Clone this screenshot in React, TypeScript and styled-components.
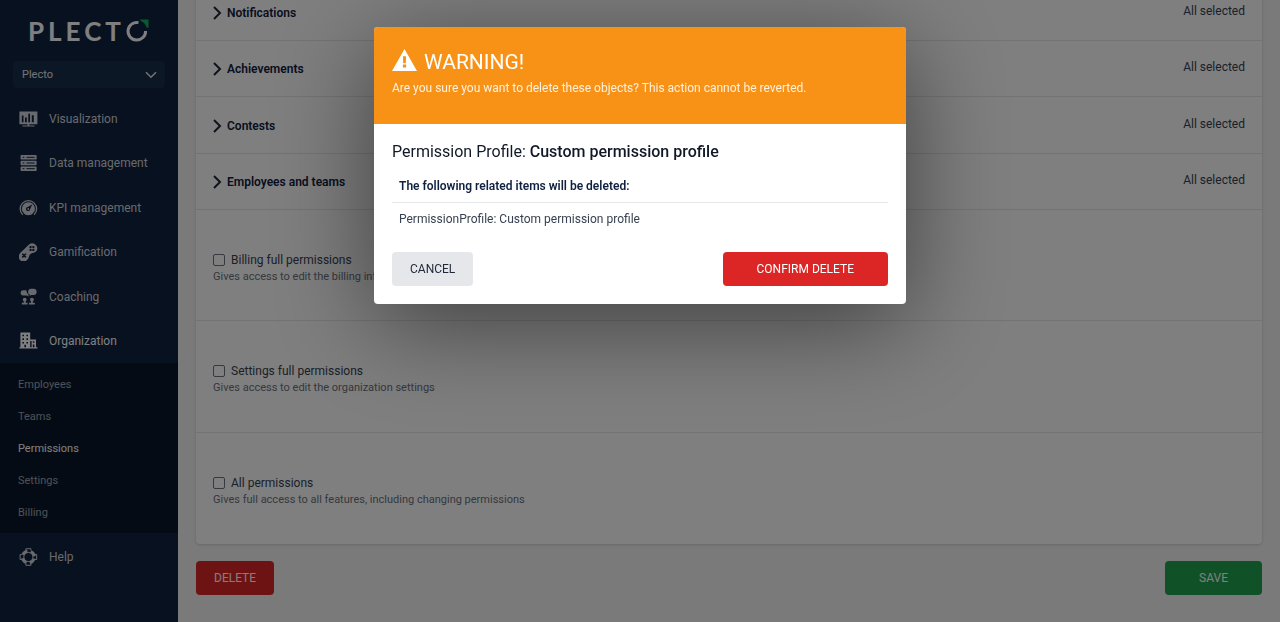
import React from "react";
import styled, { createGlobalStyle, css } from "styled-components";

const GlobalStyle = createGlobalStyle`
  *, *::before, *::after { box-sizing: border-box; }
  body {
    margin: 0;
    background: #f4f4f4;
    color: #374151;
    font-family: Roboto, "Liberation Sans", sans-serif;
    font-size: 12px;
    line-height: 18px;
    overflow: hidden;
  }
  button, select, input { font: inherit; }
  h1, h2, p, ul { margin: 0; padding: 0; }
  ul { list-style: none; }
`;

/* ---------- Shell ---------- */

const Shell = styled.div`
  display: flex;
  min-height: 100vh;
`;

const Sidebar = styled.nav`
  flex: 0 0 178px;
  background: #102240;
  color: #e5e7eb;
`;

const Main = styled.main`
  flex: 1;
  min-width: 0;
  padding: 0 18px;
`;

/* ---------- Sidebar ---------- */

const Logo = styled.a`
  display: flex;
  align-items: center;
  height: 61px;
  padding-left: 28px;
  color: #fff;
  font-family: Lato, sans-serif;
  font-size: 26px;
  font-weight: 700;
  line-height: 30px;
  letter-spacing: 4px;
  text-decoration: none;
`;

const AccountPicker = styled.label`
  display: grid;
  align-items: center;
  margin: 0 13px 8px;
  svg {
    grid-area: 1 / 1;
    justify-self: end;
    margin-right: 8px;
    pointer-events: none;
  }
`;

const AccountSelect = styled.select`
  grid-area: 1 / 1;
  appearance: none;
  width: 100%;
  height: 27px;
  padding: 0 9px;
  border: 0;
  border-radius: 4px;
  background: #182e4b;
  color: #e5e7eb;
  font-size: 11px;
`;

const MenuList = styled.ul`
  display: grid;
  grid-auto-rows: 1fr;
  height: 267px;
  li { display: grid; }
`;

const MenuLink = styled.a<{ $active?: boolean }>`
  display: flex;
  align-items: center;
  gap: 11px;
  min-height: 44px;
  padding: 1px 0 0 19px;
  color: ${(p) => (p.$active ? "#ffffff" : "#d1d5db")};
  text-decoration: none;
`;

const SubMenu = styled.ul`
  padding: 6px 0 4px;
  border-bottom: 1px solid #14283c;
  background: #0b1728;
`;

const SubLink = styled.a<{ $active?: boolean }>`
  display: flex;
  align-items: center;
  height: 32px;
  padding-left: 18px;
  color: ${(p) => (p.$active ? "#ffffff" : "#9ca3af")};
  font-size: 11px;
  text-decoration: none;
`;

/* ---------- Permissions card ---------- */

const Card = styled.section`
  margin-top: -16px;
  border-radius: 4px;
  background: #fff;
  box-shadow: 0 1px 3px rgba(0, 0, 0, 0.16);
`;

const Groups = styled.ul`
  display: grid;
  grid-auto-rows: 1fr;
  height: 226px;
`;

const Group = styled.li`
  display: flex;
  align-items: center;
  justify-content: space-between;
  padding: 0 17px;
  border-bottom: 1px solid #e5e7eb;
`;

const GroupToggle = styled.button`
  display: flex;
  align-items: center;
  gap: 5px;
  padding: 2px 0 0;
  border: 0;
  background: none;
  color: #0f2040;
  font-weight: 600;
`;

const GroupState = styled.span`
  padding-bottom: 2px;
`;

const Options = styled.div`
  display: grid;
  grid-auto-rows: 1fr;
  height: 334px;
`;

const Option = styled.div`
  display: flex;
  flex-direction: column;
  justify-content: center;
  padding: 6px 17px 0;
  border-bottom: 1px solid #e5e7eb;
  &:last-child { border-bottom: 0; }
`;

const OptionLabel = styled.label`
  display: flex;
  align-items: center;
  gap: 6px;
`;

const CheckBox = styled.input`
  appearance: none;
  width: 12px;
  height: 12px;
  margin: 0;
  border: 1px solid #6b7280;
  border-radius: 2px;
  background: #fff;
`;

const OptionHint = styled.p`
  color: #6b7280;
  font-size: 11px;
  line-height: 16px;
`;

/* ---------- Buttons ---------- */

const tones = {
  danger: css`background: #dc2626; color: #fff;`,
  success: css`background: #22a350; color: #fff;`,
  neutral: css`background: #e5e7eb; color: #1f2937;`,
};

const Button = styled.button<{ $tone: keyof typeof tones; $wide?: boolean }>`
  height: 34px;
  padding: 0 ${(p) => (p.$wide ? 34 : 18)}px;
  border: 0;
  border-radius: 4px;
  text-transform: uppercase;
  ${(p) => tones[p.$tone]}
`;

const ButtonRow = styled.div`
  display: flex;
  justify-content: space-between;
  margin-top: 17px;
`;

/* ---------- Dialog ---------- */

const Backdrop = styled.div`
  position: fixed;
  inset: 0;
  display: flex;
  align-items: flex-start;
  justify-content: center;
  padding-top: 27px;
  background: rgba(0, 0, 0, 0.5);
`;

const Dialog = styled.div`
  width: 532px;
  border-radius: 4px;
  background: #fff;
  box-shadow: 0 20px 100px rgba(0, 0, 0, 0.5);
  overflow: hidden;
`;

const DialogHeader = styled.header`
  padding: 19px 18px 27px;
  background: #f89217;
  color: #fff;
`;

const DialogTitle = styled.h1`
  display: flex;
  align-items: center;
  gap: 7px;
  font-size: 21px;
  font-weight: 400;
  line-height: 32px;
`;

const DialogText = styled.p`
  padding-top: 1px;
  color: #fff1dc;
`;

const DialogBody = styled.div`
  padding: 17px 18px 18px;
`;

const ObjectTitle = styled.h2`
  color: #111827;
  font-size: 16px;
  font-weight: 400;
  line-height: 22px;
  strong { font-weight: 500; }
`;

const RelatedTable = styled.table`
  width: 100%;
  margin-top: 7px;
  border-collapse: collapse;
  text-align: left;
  th {
    padding: 7px;
    border-bottom: 1px solid #e5e7eb;
    color: #0f2040;
    font-weight: 600;
  }
  td { padding: 7px; }
`;

/* ---------- Icons ---------- */

const Icon = ({ children }: { children: React.ReactNode }) => (
  <svg width="19" height="18" viewBox="0 0 19 18" fill="currentColor" aria-hidden="true">
    {children}
  </svg>
);

const BoardIcon = () => (
  <Icon>
    <path
      fillRule="evenodd"
      d="M.4 1.5h18v12.7H.4zM2.8 5.4v6.8h1.7V5.4zM6 7.6v4.6h1.8V7.6zM9.3 3.8v8.4H11V3.8zM12.8 5.2v7h2v-7z"
    />
    <path d="M8.5 14h1.8v1.6h5.2v1H3.4v-1h5.1z" />
  </Icon>
);

const ServerIcon = () => (
  <Icon>
    {[1, 6.7, 12.4].map((y) => (
      <g key={y}>
        <rect x="1.6" y={y} width="16" height="4.6" rx=".7" />
        <path stroke="#102240" strokeWidth="1" d={`M3.6 ${y + 2.3}h1.8M7.5 ${y + 2.3}h8.2`} />
      </g>
    ))}
  </Icon>
);

const GaugeIcon = () => (
  <Icon>
    <path
      fill="none"
      stroke="currentColor"
      strokeWidth="1.3"
      d="M3.7 15.8A8.2 8.2 0 1 1 15.1 15.8"
    />
    <path
      fillRule="evenodd"
      d="M9.4 3.3a6.4 6.4 0 0 1 4.7 10.8c-1.1 1.5-2.6 2.2-4.7 2.2s-3.6-.7-4.7-2.2A6.4 6.4 0 0 1 9.4 3.3zM13.3 5.2 8.9 7.9a2.1 2.1 0 1 0 2.2 2.3zM9.3 9.1a.9.9 0 1 1 0 1.8.9.9 0 0 1 0-1.8z"
    />
  </Icon>
);

const GamepadIcon = () => (
  <Icon>
    <path d="M10 1.6a5 5 0 0 1 7.6 6.2c-.7 1.2-1.7 1.5-3.2 2-2.8.9-3.7 1.5-4.4 3.7-.4 1.6-.9 2.6-2 3.4A4.6 4.6 0 0 1 .9 10.6c.6-1 1.5-1.6 2.6-2.8z" />
    <g fill="#102240">
      <rect x="10.5" y="3.1" width="2.1" height="2.1" rx=".6" />
      <rect x="13.3" y="3.1" width="2.1" height="2.1" rx=".6" />
      <rect x="10.5" y="5.9" width="2.1" height="2.1" rx=".6" />
      <rect x="13.3" y="5.9" width="2.1" height="2.1" rx=".6" />
    </g>
    <path stroke="#102240" strokeWidth="1.6" d="m3.3 10.8 3.6 3.6m0-3.6-3.6 3.6" />
  </Icon>
);

const CoachingIcon = () => (
  <Icon>
    <path d="M4.300 2.2h3.100c.1 2 .8 3.300 2 4v2.200l-1.500-.9H4.300a2.650 2.650 0 0 1 0-5.300z" />
    <path d="M11.6.8h2.800a3.100 3.100 0 0 1 .3 6.200h-2.600l-1.400 1V6.600A3.100 3.100 0 0 1 11.600.8z" />
    {[5.7, 12.9].map((x) => (
      <g key={x}>
        <circle cx={x} cy="11.600" r="1.900" />
        <path d={`M${x - 0.9} 13h1.8v1.7h2v1.900h-5.800v-1.900h2z`} />
      </g>
    ))}
  </Icon>
);

const BuildingsIcon = () => (
  <Icon>
    <path
      fillRule="evenodd"
      d="M1.4.6h9.8v6.8H17v7.8h1.500v1.400H.4v-1.400h1zM3.4 2.7v1.6H5V2.700zM7.400 2.700v1.600H9V2.700zM3.400 6.300v1.600H5V6.300zM7.400 6.300v1.600H9V6.300zM3.400 9.900v1.600H5V9.900zM7.400 9.900v1.600H9V9.900zM5.400 12.800v2.400H7v-2.400zM11.200 9v6.200h1.400V9zM13.800 9.200v1.600h1.600V9.200zM13.800 12.400v2.800h1.600v-2.800z"
    />
  </Icon>
);

const LifebuoyIcon = () => (
  <Icon>
    <g fill="none" stroke="currentColor">
      <circle cx="9.4" cy="9" r="5.9" strokeWidth="3" strokeDasharray="5.8 3.468" strokeDashoffset="-1.734" />
      <circle cx="9.4" cy="9" r="4.6" strokeWidth="1" />
      <path
        strokeWidth="1"
        d="M6.9 2.4V.7h5v1.700M6.900 15.600v1.700h5v-1.700M2.800 6.500H1.100v5h1.700M16 6.500h1.700v5H16"
      />
    </g>
  </Icon>
);

const LogoMark = () => (
  <svg width="25" height="26" viewBox="0 0 25 26" aria-hidden="true">
    <path
      d="M13.500 4.600A8.800 8.800 0 1 0 20.600 13"
      fill="none"
      stroke="currentColor"
      strokeWidth="3"
    />
    <path d="M14.500 1.500h9V10.200l-2.200-1.200a8 8 0 0 0-5-5.800z" fill="#16b45c" />
  </svg>
);

const ChevronDown = () => (
  <svg width="12" height="8" viewBox="0 0 12 8" fill="none" stroke="#e5e7eb" strokeWidth="1.5" aria-hidden="true">
    <path d="m1 1.2 5 5 5-5" />
  </svg>
);

const ChevronRight = () => (
  <svg width="9" height="14" viewBox="0 0 9 14" fill="none" stroke="#1f2937" strokeWidth="2" aria-hidden="true">
    <path d="m1 1 6 6-6 6" />
  </svg>
);

const WarningIcon = () => (
  <svg width="25" height="26" viewBox="0 0 25 26" fill="#fff" aria-hidden="true">
    <path
      fillRule="evenodd"
      d="M12.5 0 25 22H0zM10.900 7.300l.3 6.900h2.600l.3-6.900zM10.900 15.600v3h3.200v-3z"
    />
  </svg>
);

/* ---------- Page ---------- */

const menu = [
  { label: "Visualization", icon: <BoardIcon /> },
  { label: "Data management", icon: <ServerIcon /> },
  { label: "KPI management", icon: <GaugeIcon /> },
  { label: "Gamification", icon: <GamepadIcon /> },
  { label: "Coaching", icon: <CoachingIcon /> },
  { label: "Organization", icon: <BuildingsIcon />, active: true },
];

const subMenu = ["Employees", "Teams", "Permissions", "Settings", "Billing"];

const groups = ["Notifications", "Achievements", "Contests", "Employees and teams"];

const options = [
  { id: "billing", label: "Billing full permissions", hint: "Gives access to edit the billing info" },
  { id: "settings", label: "Settings full permissions", hint: "Gives access to edit the organization settings" },
  { id: "all", label: "All permissions", hint: "Gives full access to all features, including changing permissions" },
];

export default function App() {
  return (
    <>
      <GlobalStyle />
      <Shell>
        <Sidebar>
          <Logo href="#" aria-label="Plecto">
            PLECT
            <LogoMark />
          </Logo>
          <AccountPicker>
            <AccountSelect aria-label="Organization" defaultValue="Plecto">
              <option>Plecto</option>
            </AccountSelect>
            <ChevronDown />
          </AccountPicker>
          <MenuList>
            {menu.map((m) => (
              <li key={m.label}>
                <MenuLink href="#" $active={m.active}>
                  {m.icon}
                  {m.label}
                </MenuLink>
              </li>
            ))}
          </MenuList>
          <SubMenu>
            {subMenu.map((s) => (
              <li key={s}>
                <SubLink href="#" $active={s === "Permissions"}>{s}</SubLink>
              </li>
            ))}
          </SubMenu>
          <MenuLink href="#">
            <LifebuoyIcon />
            Help
          </MenuLink>
        </Sidebar>

        <Main>
          <Card>
            <Groups>
              {groups.map((g) => (
                <Group key={g}>
                  <GroupToggle type="button" aria-expanded="false">
                    <ChevronRight />
                    {g}
                  </GroupToggle>
                  <GroupState>All selected</GroupState>
                </Group>
              ))}
            </Groups>
            <Options>
              {options.map((o) => (
                <Option key={o.id}>
                  <OptionLabel htmlFor={o.id}>
                    <CheckBox type="checkbox" id={o.id} />
                    {o.label}
                  </OptionLabel>
                  <OptionHint>{o.hint}</OptionHint>
                </Option>
              ))}
            </Options>
          </Card>
          <ButtonRow>
            <Button type="button" $tone="danger">Delete</Button>
            <Button type="button" $tone="success" $wide>Save</Button>
          </ButtonRow>
        </Main>
      </Shell>

      <Backdrop>
        <Dialog role="dialog" aria-modal="true" aria-labelledby="dialog-title">
          <DialogHeader>
            <DialogTitle id="dialog-title">
              <WarningIcon />
              WARNING!
            </DialogTitle>
            <DialogText>
              Are you sure you want to delete these objects? This action cannot be reverted.
            </DialogText>
          </DialogHeader>
          <DialogBody>
            <ObjectTitle>
              Permission Profile: <strong>Custom permission profile</strong>
            </ObjectTitle>
            <RelatedTable>
              <thead>
                <tr><th scope="col">The following related items will be deleted:</th></tr>
              </thead>
              <tbody>
                <tr><td>PermissionProfile: Custom permission profile</td></tr>
              </tbody>
            </RelatedTable>
            <ButtonRow>
              <Button type="button" $tone="neutral">Cancel</Button>
              <Button type="button" $tone="danger" $wide>Confirm delete</Button>
            </ButtonRow>
          </DialogBody>
        </Dialog>
      </Backdrop>
    </>
  );
}
